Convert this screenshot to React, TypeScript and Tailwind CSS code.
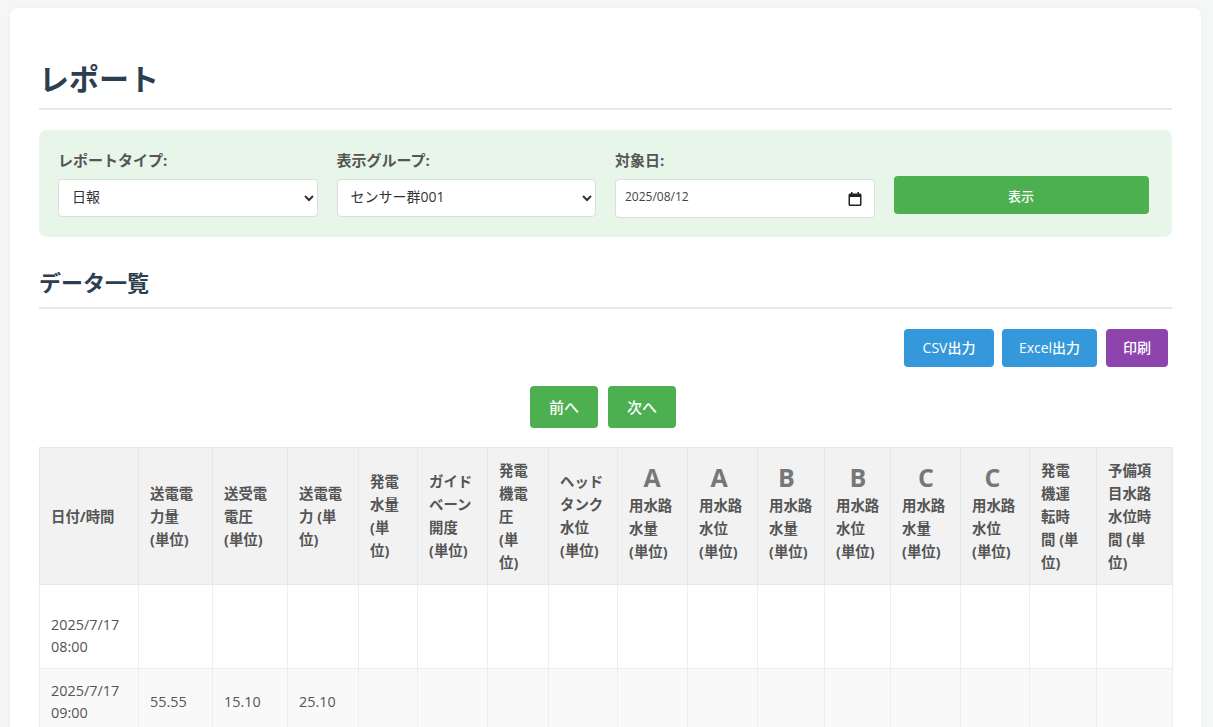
import { Fragment } from 'react'

const font = 'font-["Open_Sans","Noto_Sans_CJK_JP",sans-serif]'

const columns = [
  { w: 'w-[99px]', label: '日付/時間' },
  { w: 'w-[74px]', label: '送電電力量 (単位)' },
  { w: 'w-[75px]', label: '送受電電圧 (単位)' },
  { w: 'w-[71px]', label: '送電電力 (単位)' },
  { w: 'w-[59px]', label: '発電水量 (単位)' },
  { w: 'w-[70px]', label: 'ガイドベーン開度 (単位)' },
  { w: 'w-[61px]', label: '発電機電圧 (単位)' },
  { w: 'w-[69px]', label: 'ヘッドタンク水位 (単位)' },
  { w: 'w-[70px]', label: '用水路水量', mark: 'A', markPad: 'pr-[8px]' },
  { w: 'w-[70px]', label: '用水路水位', mark: 'A', markPad: 'pr-[14px]' },
  { w: 'w-[67px]', label: '用水路水量', mark: 'B', markPad: 'pr-[16px]' },
  { w: 'w-[66px]', label: '用水路水位', mark: 'B', markPad: 'pr-[6px]' },
  { w: 'w-[70px]', label: '用水路水量', mark: 'C', markPad: 'pr-[6px]' },
  { w: 'w-[69px]', label: '用水路水位', mark: 'C', markPad: 'pr-[12px]' },
  { w: 'w-[67px]', label: '発電機運転時間 (単位)' },
  { w: 'w-[76px]', label: '予備項目水路水位時間 (単位)' },
]

const rows = [
  { date: '2025/7/17', time: '08:00', values: [] as string[] },
  { date: '2025/7/17', time: '09:00', values: ['55.55', '15.10', '25.10'] },
]

export default function App() {
  return (
    <div className={`h-screen overflow-hidden bg-[#f4f7f6] pt-2 pl-2.5 pr-3 ${font}`}>
      <div className="rounded-lg bg-white px-[29px] pt-[51px] pb-8 shadow-[0_0_6px_rgba(0,0,0,0.04)]">
        <h1 className="border-b-2 border-[#e8e8e8] pb-[10px] text-[30px] leading-[39px] font-bold text-[#2c3e50]">
          レポート
        </h1>

        {/* Filter panel */}
        <div className="mt-5 flex h-[107px] items-start gap-[19px] rounded-lg bg-[#e8f5e9] px-[19px] pt-[20px]">
          <Field label="レポートタイプ:">
            <select className="h-[38px] w-full rounded border border-[#ddd] bg-white pb-[3px] pl-[9px] text-sm text-[#333]">
              <option>日報</option>
            </select>
          </Field>
          <Field label="表示グループ:">
            <select className="h-[38px] w-full rounded border border-[#ddd] bg-white pb-[3px] pl-[9px] text-sm text-[#333]">
              <option>センサー群001</option>
            </select>
          </Field>
          <Field label="対象日:">
            <div className="flex h-[39px] w-full items-center justify-between rounded border border-[#ddd] bg-white pr-[12px] pl-[9px]">
              <span className="-mt-[3px] text-xs text-[#444]">2025/08/12</span>
              <svg width="14" height="14" viewBox="0 0 14 14" className="text-[#222]">
                <path
                  fill="currentColor"
                  d="M3 0h1.5v1.5h5V0H11v1.5h1c.8 0 1.5.7 1.5 1.5v9.5c0 .8-.7 1.5-1.5 1.5H2c-.8 0-1.5-.7-1.5-1.5V3c0-.8.7-1.5 1.5-1.5h1V0zM2 5v7.5h10V5H2z"
                />
              </svg>
            </div>
          </Field>
          <button className="mt-[26px] h-[38px] w-[255px] rounded bg-[#4caf50] pt-[3px] text-[13px] font-medium text-white">
            表示
          </button>
        </div>

        <h2 className="mt-[29px] border-b-2 border-[#e8e8e8] pb-[8px] text-[22px] leading-[33px] font-bold text-[#2c3e50]">
          データ一覧
        </h2>

        {/* Export actions */}
        <div className="mt-[20px] flex justify-end gap-2 pr-1">
          <button className="h-[38px] w-[90px] rounded bg-[#3498db] text-sm font-medium text-white">CSV出力</button>
          <button className="h-[38px] w-[95px] rounded bg-[#3498db] text-sm font-medium text-white">Excel出力</button>
          <button className="ml-px h-[38px] w-[62px] rounded bg-[#8e44ad] text-sm font-medium text-white">印刷</button>
        </div>

        {/* Pager */}
        <div className="mt-[19px] flex justify-center gap-[10px] pr-[5px]">
          <button className="h-[42px] w-[68px] rounded bg-[#4caf50] text-[15px] font-medium text-white">前へ</button>
          <button className="h-[42px] w-[68px] rounded bg-[#4caf50] text-[15px] font-medium text-white">次へ</button>
        </div>

        <table className="mt-[19px] w-full table-fixed border-collapse">
          <thead>
            <tr className="h-[137px] bg-[#f2f2f2]">
              {columns.map((col, i) => (
                <th
                  key={i}
                  className={`${col.w} border border-[#e8e8e8] pl-[11px] text-left align-middle text-[14.4px] leading-[23px] font-bold text-[#555] ${
                    col.mark ? 'pr-1' : 'pr-3'
                  }`}
                >
                  {col.mark && (
                    <span
                      className={`block h-[25px] text-center text-[25px] leading-[17px] font-bold text-[#777] ${col.markPad}`}
                    >
                      {col.mark}
                    </span>
                  )}
                  {col.label}
                  {col.mark && (
                    <Fragment>
                      <br />
                      (単位)
                    </Fragment>
                  )}
                </th>
              ))}
            </tr>
          </thead>
          <tbody>
            {rows.map((row, r) => (
              <tr key={r} className={r % 2 === 1 ? 'h-[66px] bg-[#f9f9f9]' : 'h-[84px] bg-white'}>
                {columns.map((_, i) => (
                  <td
                    key={i}
                    className={`border border-[#eee] pr-3 pl-[11px] align-middle text-[14.4px] leading-[21.5px] text-[#555] ${
                      r === 0 && i === 0 ? 'pt-[18px]' : ''
                    }`}
                  >
                    {i === 0 ? (
                      <Fragment>
                        {row.date}
                        <br />
                        {row.time}
                      </Fragment>
                    ) : (
                      row.values[i - 1]
                    )}
                  </td>
                ))}
              </tr>
            ))}
          </tbody>
        </table>
      </div>
    </div>
  )
}

function Field({ label, children }: { label: string; children: React.ReactNode }) {
  return (
    <div className="w-[259.5px]">
      <label className="-mt-px mb-[8px] block text-[15px] leading-[22px] font-bold text-[#555]">{label}</label>
      {children}
    </div>
  )
}
